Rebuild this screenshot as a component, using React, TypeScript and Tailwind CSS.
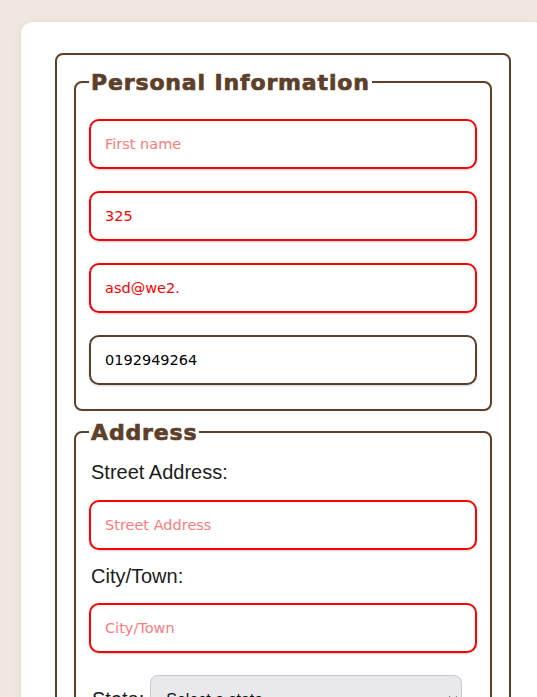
import React from 'react'

const brown = 'border-[#5d3f2a]'

const inputBase =
  "block w-full h-[50px] rounded-[10px] border-2 bg-white pl-[14px] pr-3 text-[14.5px] outline-none shadow-[0_1px_2px_rgba(0,0,0,0.18)] font-['DejaVu_Sans',sans-serif]"

const badInput = `${inputBase} border-[#ff0000] text-[#ff0000] placeholder:text-[#ff7b7b]`
const okInput = `${inputBase} ${brown} text-black placeholder:text-[#888]`

const Legend = ({ children }: { children: React.ReactNode }) => (
  <legend className="px-[2px] pt-[2px] text-[22px] leading-[26px] font-bold tracking-[0.85px] text-[#5d3f2a] [-webkit-text-stroke:0.7px_#5d3f2a] font-['DejaVu_Sans',sans-serif]">
    {children}
  </legend>
)

const App = () => {
  return (
    <div className="min-h-screen w-full overflow-hidden bg-[#f0e8df] pt-[22px] pl-[21px] font-['Liberation_Sans',Arial,sans-serif]">
      <div className="w-[524px] min-h-[700px] rounded-xl bg-white pt-[31px] pl-[34px] pr-[34px] shadow-[0_2px_8px_rgba(0,0,0,0.08)]">
        <form className={`w-[456px] rounded-lg border-2 ${brown} px-[17px] pt-[13px] pb-6`}>
          <fieldset className={`rounded-lg border-2 ${brown} px-[13px] pt-[23px] pb-6`}>
            <Legend>Personal Information</Legend>
            <div className="flex flex-col gap-[22px]">
              <input className={badInput} placeholder="First name" />
              <input className={badInput} defaultValue="325" />
              <input className={badInput} defaultValue="asd@we2." />
              <input className={okInput} defaultValue="0192949264" />
            </div>
          </fieldset>

          <fieldset className={`mt-[7px] rounded-lg border-2 ${brown} px-[13px] pt-[15px] pb-6`}>
            <Legend>Address</Legend>
            <label className="block pl-[2px] text-[20px] leading-[23px] text-[#1c1c1c]">Street Address:</label>
            <input className={`${badInput} mt-4`} placeholder="Street Address" />
            <label className="mt-[15px] block pl-[2px] text-[20px] leading-[23px] text-[#1c1c1c]">City/Town:</label>
            <input className={`${badInput} mt-[15px]`} placeholder="City/Town" />
            <div className="mt-[22px] flex items-center gap-[6px] pl-[3px]">
              <label className="text-[20px] leading-[23px] text-[#1c1c1c]">State:</label>
              <select className="h-[48px] w-[312px] rounded-lg border border-[#c9c9cd] bg-[#e9e9ed] pl-[11px] pr-3 text-[16px] text-[#111]">
                <option>Select a state</option>
              </select>
            </div>
          </fieldset>
        </form>
      </div>
    </div>
  )
}

export default App
